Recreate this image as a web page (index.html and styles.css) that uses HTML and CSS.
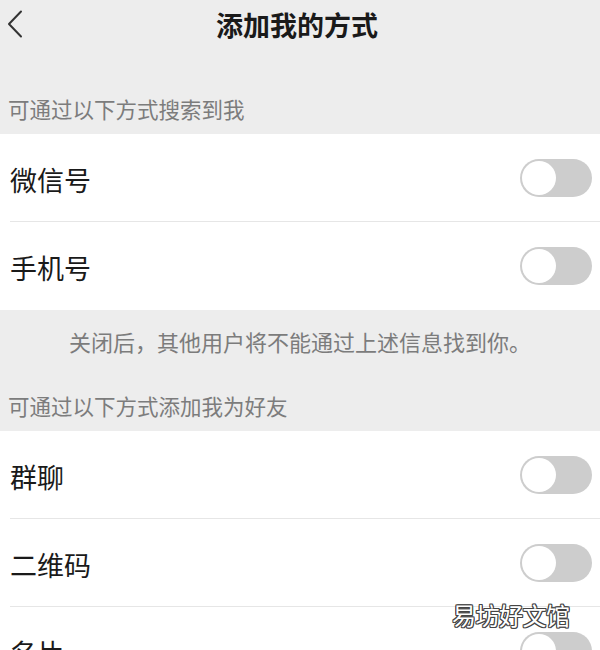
FILE: index.html
```html
<!DOCTYPE html>
<html lang="zh-CN">
<head>
<meta charset="utf-8">
<title>添加我的方式</title>
<link rel="stylesheet" href="styles.css">
</head>
<body>
<div class="page">
  <header class="nav">
    <svg class="back" width="16" height="28" viewBox="0 0 16 28"><polyline points="14,1.5 2,14 14,26.5" fill="none" stroke="#333" stroke-width="2" stroke-linecap="round" stroke-linejoin="round"/></svg>
    <h1 class="title">添加我的方式</h1>
  </header>

  <div class="label first">可通过以下方式搜索到我</div>
  <div class="group">
    <div class="row"><span class="name">微信号</span><span class="switch"><span class="knob"></span></span></div>
    <div class="row"><span class="name">手机号</span><span class="switch"><span class="knob"></span></span></div>
  </div>
  <div class="note">关闭后，其他用户将不能通过上述信息找到你。</div>

  <div class="label second">可通过以下方式添加我为好友</div>
  <div class="group">
    <div class="row"><span class="name">群聊</span><span class="switch"><span class="knob"></span></span></div>
    <div class="row"><span class="name">二维码</span><span class="switch"><span class="knob"></span></span></div>
    <div class="row"><span class="name">名片</span><span class="switch"><span class="knob"></span></span></div>
  </div>

  <div class="watermark">易坊好文馆</div>
</div>
</body>
</html>
```
FILE: styles.css
```css
html, body {
  margin: 0;
  padding: 0;
  background: #ededed;
  font-family: "Noto Sans CJK SC", "Noto Sans", sans-serif;
  overflow: hidden;
}

.page {
  position: relative;
  width: 600px;
  height: 650px;
  overflow: hidden;
}

.nav {
  position: relative;
  height: 50px;
  display: flex;
  align-items: center;
  justify-content: center;
}

.back {
  position: absolute;
  left: 7px;
  top: 10px;
}

.title {
  margin: 0 0 0 -6px;
  font-size: 27px;
  font-weight: 700;
  line-height: 50px;
  color: #1a1a1a;
}

.label {
  font-size: 21.5px;
  line-height: 30px;
  color: #7c7c7c;
  padding: 0 8px 10px;
}

.label.first { padding-top: 44px; }
.label.second { padding-top: 35px; }

.group {
  background: #fff;
}

.row {
  height: 88px;
  box-sizing: border-box;
  margin-left: 10px;
  padding-right: 8px;
  display: flex;
  align-items: center;
  justify-content: space-between;
  border-bottom: 1px solid #e6e6e6;
}

.row:last-child { border-bottom: none; }

.name {
  font-size: 27px;
  color: #1a1a1a;
  padding-top: 3px;
}

.switch {
  width: 72px;
  height: 38px;
  border-radius: 19px;
  background: #cdcdcd;
  box-sizing: border-box;
  padding: 2px;
  display: flex;
  align-items: center;
}

.knob {
  width: 34px;
  height: 34px;
  border-radius: 50%;
  background: #fff;
}

.note {
  text-align: center;
  font-size: 22px;
  line-height: 30px;
  color: #7c7c7c;
  padding-top: 16px;
}

.watermark {
  position: absolute;
  left: 452px;
  top: 600px;
  font-size: 24px;
  line-height: 30px;
  color: #fff;
  letter-spacing: -0.5px;
  text-shadow: 1px 0 0 #444, -1px 0 0 #444, 0 1px 0 #444, 0 -1px 0 #444,
    1px 1px 0 #444, -1px -1px 0 #444, 1px -1px 0 #444, -1px 1px 0 #444;
}
```
